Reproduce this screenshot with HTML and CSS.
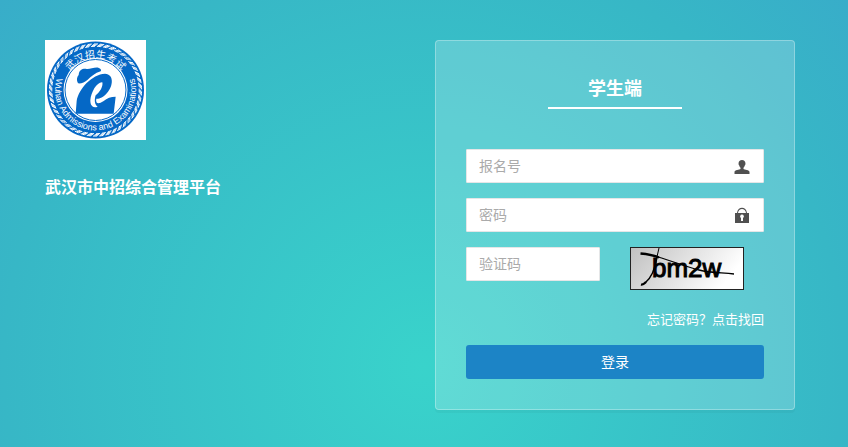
FILE: index.html
```html
<!DOCTYPE html>
<html lang="zh-CN">
<head>
<meta charset="utf-8">
<meta name="viewport" content="width=device-width, initial-scale=1">
<title>武汉市中招综合管理平台</title>
<link rel="stylesheet" href="styles.css">
</head>
<body>
<main class="page">
  <section class="brand">
    <svg class="logo" viewBox="0 0 101 100" role="img" aria-label="武汉招生考试">
      <defs>
        <path id="arc-top" d="M18.500 50a32 32 0 0 1 64 0"/>
        <path id="arc-bottom" d="M14.100 32.500a40.400 40.400 0 1 0 72.800 0"/>
      </defs>
      <rect width="101" height="100" fill="#fff"/>
      <circle cx="50.500" cy="50" r="48.500" fill="#0568c6"/>
      <g class="rope">
        <circle cx="50.500" cy="50" r="43.700" pathLength="184" stroke-dashoffset="1"/>
        <circle cx="50.500" cy="50" r="44.500" pathLength="184" stroke-dashoffset="0.300"/>
        <circle cx="50.500" cy="50" r="45.300" pathLength="184" stroke-dashoffset="-0.300"/>
        <circle cx="50.500" cy="50" r="46.100" pathLength="184" stroke-dashoffset="-1"/>
      </g>
      <circle cx="50.500" cy="50" r="32" fill="#fff"/>
      <circle cx="50.500" cy="50" r="30.500" fill="none" stroke="#0568c6" stroke-width="1"/>
      <g transform="translate(25 22) scale(.3333)">
        <path fill="#0568c6" d="M24 64C19 55 20 46 26 39C27 24 38 19 50 21C60 22 73 15 85 17C92 19 95 24 92 28C75 33 63 44 53 53C44 61 32 66 24 64Z"/>
        <path fill="#0568c6" d="M17 155L20 117C26 80 66 37 105 35C133 37 130 72 111 93C99 107 87 111 79 110C76 125 85 128 100 118C112 108 122 104 137 104L131 155Z"/>
        <path fill="#fff" d="M97 61C82 59 63 89 61 115C61 132 69 139 83 134C73 128 73 112 77 100C90 91 100 73 97 61Z"/>
      </g>
      <text class="seal-cn" text-anchor="middle"><textPath href="#arc-top" startOffset="50%">武汉招生考试</textPath></text>
      <text class="seal-en" text-anchor="middle"><textPath href="#arc-bottom" startOffset="50%">Wuhan Admissions and Examinations</textPath></text>
    </svg>
    <h1 class="brand-name">武汉市中招综合管理平台</h1>
  </section>
  <form class="card">
    <h2 class="card-title">学生端</h2>
    <div class="field">
      <input class="input" type="text" placeholder="报名号" aria-label="报名号">
      <svg class="field-icon" viewBox="0 0 16 16" aria-hidden="true"><path d="M8 2C5.900 2 4.500 3.400 4.600 5.200C4.300 6 4.800 6.800 5.100 7.200C5.400 8.500 6 9.200 6.500 9.700V11C5.500 12 .500 11.700 .500 14V16H15.500V14C15.500 11.700 10.500 12 9.500 11V9.700C10 9.200 10.600 8.500 10.900 7.200C11.200 6.800 11.700 6 11.400 5.200C11.500 3.400 10.100 2 8 2Z"/></svg>
    </div>
    <div class="field">
      <input class="input" type="password" placeholder="密码" aria-label="密码">
      <svg class="field-icon" viewBox="0 0 16 16" aria-hidden="true"><path fill-rule="evenodd" d="M1 6H3C3.500-.900 12.500-.900 13 6H15V16H1ZM4 6H12C11.500.600 4.500.600 4 6ZM8 7.500A1.900 1.900 0 0 0 7 11V14H9V11A1.900 1.900 0 0 0 8 7.500Z"/></svg>
    </div>
    <div class="field code-row">
      <input class="input" type="text" placeholder="验证码" aria-label="验证码">
      <svg class="captcha" viewBox="0 0 114 43" role="img" aria-label="验证码图片">
        <defs><linearGradient id="paper" x2="1" y2=".300"><stop stop-color="#c0c0c0"/><stop offset="1" stop-color="#fff"/></linearGradient></defs>
        <rect x=".500" y=".500" width="113" height="42" fill="url(#paper)" stroke="#222"/>
        <text class="captcha-text" x="22" y="30">bm2w</text>
        <path d="M10.500 6.500Q22 7.500 29 10.500" fill="none" stroke="#000" stroke-width="2.400"/>
        <path d="M28 10C42 14 57 20 69 23S91 25.500 104 27" fill="none" stroke="#000" stroke-width="1.300"/>
        <path d="M29 1L26 14" fill="none" stroke="#000"/>
        <path d="M27 10C25 23 20 32 15 36" fill="none" stroke="#000" stroke-width="1.600"/>
        <path d="M16 35Q13 38 11 37.500" fill="none" stroke="#000" stroke-width="2.400"/>
      </svg>
    </div>
    <a class="forgot" href="#">忘记密码？点击找回</a>
    <button class="submit" type="submit">登录</button>
  </form>
</main>
</body>
</html>
```

FILE: styles.css
```css
* {
  box-sizing: border-box;
}

body {
  margin: 0;
  min-height: 100vh;
  font-family: "Open Sans", "Noto Sans CJK SC", sans-serif;
  font-size: 14px;
  line-height: 20px;
  color: #fff;
  background: radial-gradient(circle farthest-corner at 50% 82%, #39d3cb 0%, #37b7c6 75%, #38adc9 100%);
}

.page {
  display: grid;
  grid-template-columns: 1fr 360px;
  align-items: start;
  padding: 40px 53px 36px 45px;
}

.logo {
  display: block;
  width: 101px;
  height: 100px;
}

.rope {
  fill: none;
  stroke: #fff;
  stroke-width: 1;
  stroke-dasharray: 2.6 1.4;
}

.seal-cn {
  font-family: "Noto Sans CJK SC", sans-serif;
  font-size: 10px;
  fill: #fff;
}

.seal-en {
  font-family: "Liberation Sans", sans-serif;
  font-size: 9px;
  fill: #fff;
}

.brand-name {
  margin: 35px 0 0;
  font-size: 16px;
  line-height: 24px;
  font-weight: 700;
}

.card {
  display: flex;
  flex-direction: column;
  padding: 30px;
  border: 1px solid rgba(255, 255, 255, 0.3);
  border-radius: 4px;
  background: rgba(255, 255, 255, 0.2);
  box-shadow: 0 3px 0 rgba(12, 12, 12, 0.03);
}

.card-title {
  align-self: center;
  width: 134px;
  margin: 0 0 40px;
  padding: 4px 0 6px;
  border-bottom: 2px solid #fff;
  font-size: 18px;
  line-height: 26px;
  text-align: center;
}

.field {
  display: flex;
  position: relative;
  margin-bottom: 15px;
}

.input {
  width: 100%;
  height: 34px;
  padding: 5px 12px 7px;
  border: 1px solid #e5e6e7;
  border-radius: 1px;
  background: #fff;
  color: #333;
  font: inherit;
}

.input::placeholder {
  color: #aaa;
}

.field-icon {
  position: absolute;
  top: 9px;
  right: 14px;
  width: 16px;
  height: 16px;
  fill: #505050;
}

.code-row {
  display: grid;
  grid-template-columns: 134px 114px;
  align-items: start;
  gap: 30px;
}

.captcha {
  display: block;
  width: 114px;
  height: 43px;
}

.captcha-text {
  font-family: "Liberation Sans", sans-serif;
  font-size: 26px;
  stroke: #000;
  stroke-width: 1;
}

.forgot {
  align-self: flex-end;
  margin: 4px 0 16px;
  font-size: 13px;
  color: #fff;
  text-decoration: none;
}

.submit {
  height: 34px;
  padding: 0;
  border: 0;
  border-radius: 3px;
  background: #1c84c6;
  color: #fff;
  font: inherit;
}
```
